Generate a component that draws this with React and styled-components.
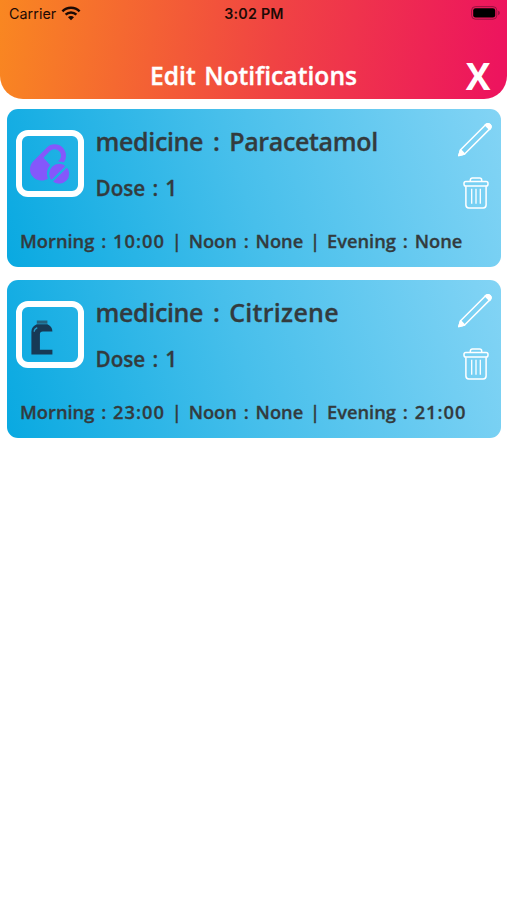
import React from "react";
import styled, { createGlobalStyle } from "styled-components";

const medicines = [
  { id: 1, name: "Paracetamol", nameSpacing: -0.35, dose: 1, icon: "pill", morning: "10:00", noon: "None", evening: "None" },
  { id: 2, name: "Citrizene", nameSpacing: 0.3, dose: 1, icon: "bottle", morning: "23:00", noon: "None", evening: "21:00" },
];

const WifiIcon = () => (
  <svg width="20" height="15" viewBox="0 0 20 15" fill="none" stroke="#1c0a05">
    <path d="M1.4 5.4a12.2 12.2 0 0 1 17.2 0" strokeWidth="2.5" />
    <path d="M4.6 8.7a7.6 7.6 0 0 1 10.8 0" strokeWidth="2.4" />
    <path d="M10 14.2L7 11.2a4.2 4.2 0 0 1 6 0z" fill="#1c0a05" stroke="none" />
  </svg>
);

const BatteryIcon = () => (
  <svg width="30" height="14" viewBox="0 0 30 14">
    <rect x="0.6" y="0.6" width="25.2" height="12.6" rx="3.8" fill="none" stroke="#7d1038" strokeOpacity="0.75" />
    <rect x="2.2" y="2.2" width="22" height="9.4" rx="2.3" fill="#000" />
    <path d="M27.3 4.8c1.8.6 1.8 3.8 0 4.4z" fill="#7d1038" />
  </svg>
);

const PillIcon = () => (
  <svg width="55" height="55" viewBox="0 0 55 55">
    <defs>
      <mask id="capsuleMask" maskUnits="userSpaceOnUse" x="0" y="0" width="55" height="55">
        <rect width="55" height="55" fill="#fff" />
        <path d="M21.5 21.7L27.9 15.1a6.5 6.5 0 0 1 9.2 9.2L30.1 31.3z" fill="#000" />
        <circle cx="37.2" cy="37.8" r="12.3" fill="#000" />
      </mask>
      <mask id="tabletMask" maskUnits="userSpaceOnUse" x="0" y="0" width="55" height="55">
        <rect width="55" height="55" fill="#fff" />
        <path d="M28 47L46.5 28.5" stroke="#000" strokeWidth="2.4" />
      </mask>
    </defs>
    <g mask="url(#capsuleMask)">
      <path d="M19.3 33.2L32.7 19.6" stroke="#8557fb" strokeWidth="22.6" strokeLinecap="round" />
    </g>
    <circle cx="37.2" cy="37.8" r="10" fill="#8557fb" mask="url(#tabletMask)" />
  </svg>
);

const BottleIcon = () => (
  <svg width="55" height="55" viewBox="0 0 55 55">
    <path d="M14.8 13.5h10.6v3.2H14.8z" fill="#24627f" />
    <path d="M14.8 17.3h10.6c3 1.3 5 3.6 5 7.1h-9.6c-1.9 0-2.9 1-2.9 2.8v15.6h12.5v4.7H9.4V24.6c0-3.6 2.4-6 5.4-7.3z" fill="#173955" />
    <path d="M12.2 24.2c.2-1.5 1-2.6 2.6-3.2" stroke="#2a9bc9" strokeWidth="1.4" strokeLinecap="round" fill="none" />
  </svg>
);

const PencilIcon = () => (
  <svg width="36" height="36" viewBox="0 0 36 36" fill="none" stroke="#fff" strokeWidth="1.5" strokeLinejoin="round">
    <path d="M1.8 33.6L3.6 27.8 28.6 2.8c1.3-1.3 3.1-1.3 4.3-.2 1.2 1.2 1.2 3-.1 4.3L7.6 32z" />
    <path d="M28.2 3c1.4-1.6 3.4-1.8 4.8-.4 1.4 1.4 1.2 3.3-.3 4.8z" fill="#fff" />
    <path d="M1.8 33.6L3.6 27.8l4 4.2z" fill="#fff" />
  </svg>
);

const TrashIcon = () => (
  <svg width="26" height="32" viewBox="0 0 26 32" fill="none" stroke="#fff" strokeWidth="1.5" strokeLinejoin="round">
    <path d="M7.3 4.4V3.2c0-1.4.8-2.1 2.1-2.1h7.2c1.3 0 2.1.7 2.1 2.1v1.2" />
    <rect x="1" y="4.5" width="24" height="4.6" rx="1.8" />
    <path d="M2.9 9.2V28c0 1.9 1 2.9 2.9 2.9h14.4c1.9 0 2.9-1 2.9-2.9V9.2" />
    <path d="M8.7 11.8v15M13 11.8v15M17.3 11.8v15" strokeWidth="1.3" />
  </svg>
);

const MedicineCard = ({ medicine }) => (
  <Card>
    <CardTop>
      <IconBox>{medicine.icon === "pill" ? <PillIcon /> : <BottleIcon />}</IconBox>
      <Details>
        <Name>medicine : <NameValue $spacing={medicine.nameSpacing}>{medicine.name}</NameValue></Name>
        <Dose>Dose : {medicine.dose}</Dose>
      </Details>
      <Actions>
        <IconButton aria-label="edit"><PencilIcon /></IconButton>
        <IconButton aria-label="delete" $shift><TrashIcon /></IconButton>
      </Actions>
    </CardTop>
    <Schedule>
      Morning : <Time>{medicine.morning}</Time> | Noon : {medicine.noon} | Evening :{" "}
      {medicine.evening === "None" ? "None" : <Time>{medicine.evening}</Time>}
    </Schedule>
  </Card>
);

const App = () => (
  <Screen>
    <GlobalStyle />
    <Header>
      <StatusBar>
        <Carrier>Carrier <WifiIcon /></Carrier>
        <Clock>3:02 PM</Clock>
        <Battery><BatteryIcon /></Battery>
      </StatusBar>
      <TitleBar>
        <Title>Edit Notifications</Title>
        <CloseButton>X</CloseButton>
      </TitleBar>
    </Header>
    <List>
      {medicines.map((medicine) => (
        <MedicineCard key={medicine.id} medicine={medicine} />
      ))}
    </List>
  </Screen>
);

export default App;

// --- Styled Components ---
const GlobalStyle = createGlobalStyle`
  * { box-sizing: border-box; }
  body { margin: 0; background: #fff; }
`;
const Screen = styled.div`
  width: 100%; min-height: 900px; background: #fff;
  font-family: "Open Sans", "Noto Sans", sans-serif; font-weight: 600; color: #333b3e;
`;
const Header = styled.header`
  height: 98.5px; border-radius: 0 0 23px 23px;
  background: linear-gradient(97deg, #f98721 0%, #f04343 54%, #ed145e 98%);
`;
const StatusBar = styled.div`
  height: 27px; padding: 0 6px 0 9px; display: grid; align-items: center;
  grid-template-columns: 1fr auto 1fr;
  font-family: Inter, sans-serif; font-size: 14.3px; color: #1c0a05;
`;
const Carrier = styled.div`
  display: flex; align-items: center; gap: 4.5px; font-weight: 400; letter-spacing: 0.05px;
`;
const Clock = styled.div`
  margin-right: 2px; font-weight: 600; letter-spacing: 0.2px;
`;
const Battery = styled.div`
  display: flex; justify-content: flex-end; margin-top: -1px;
`;
const TitleBar = styled.div`
  height: 71px; padding: 26px 16px 0; display: grid; align-items: center;
  grid-template-columns: 26px 1fr 26px; color: #fff;
`;
const Title = styled.h1`
  grid-column: 2; margin: 0; text-align: center; white-space: nowrap;
  font-size: 24.6px; font-weight: 600; line-height: 34px; letter-spacing: 0.05px; word-spacing: 2px;
  -webkit-text-stroke: 0.35px currentColor;
`;
const CloseButton = styled.button`
  padding: 0; border: none; background: none; color: #fff; cursor: pointer;
  font-family: "Open Sans", sans-serif; font-size: 37px; font-weight: 700; line-height: 40px;
`;
const List = styled.main`
  padding: 10px 6px 0 7px; display: flex; flex-direction: column; gap: 12.5px;
  -webkit-text-stroke: 0.3px currentColor;
`;
const Card = styled.article`
  height: 158.5px; padding: 13px 8px 0 9px; border-radius: 11px;
  background: linear-gradient(72deg, #09a9e1 0%, #47bfeb 48%, #83d4f5 100%);
`;
const CardTop = styled.div`
  height: 103px; display: flex; align-items: flex-start;
`;
const IconBox = styled.div`
  width: 67.5px; height: 67.5px; margin-top: 8px; flex: none;
  border: 6px solid #fff; border-radius: 12px;
`;
const Details = styled.div`
  flex: 1; padding-left: 12px; white-space: nowrap;
`;
const Name = styled.h2`
  margin: 1px 0 0; font-size: 25px; font-weight: 600; line-height: 36px;
  letter-spacing: -0.35px; word-spacing: 3.6px;
`;
const NameValue = styled.span`
  letter-spacing: ${({ $spacing }) => $spacing}px;
`;
const Dose = styled.p`
  margin: 15px 0 0; font-size: 20.7px; line-height: 28px; letter-spacing: 0px; word-spacing: 1.8px;
`;
const Actions = styled.div`
  width: 36px; display: flex; flex-direction: column; align-items: center; gap: 19px;
`;
const IconButton = styled.button`
  padding: 0; border: none; background: none; display: flex; cursor: pointer;
  margin-left: ${({ $shift }) => ($shift ? "2px" : 0)};
`;
const Schedule = styled.p`
  margin: 2px 0 0 4px; font-size: 18.3px; line-height: 28px; word-spacing: 2.1px; white-space: nowrap;
`;
const Time = styled.span`
  letter-spacing: 1px;
`;
